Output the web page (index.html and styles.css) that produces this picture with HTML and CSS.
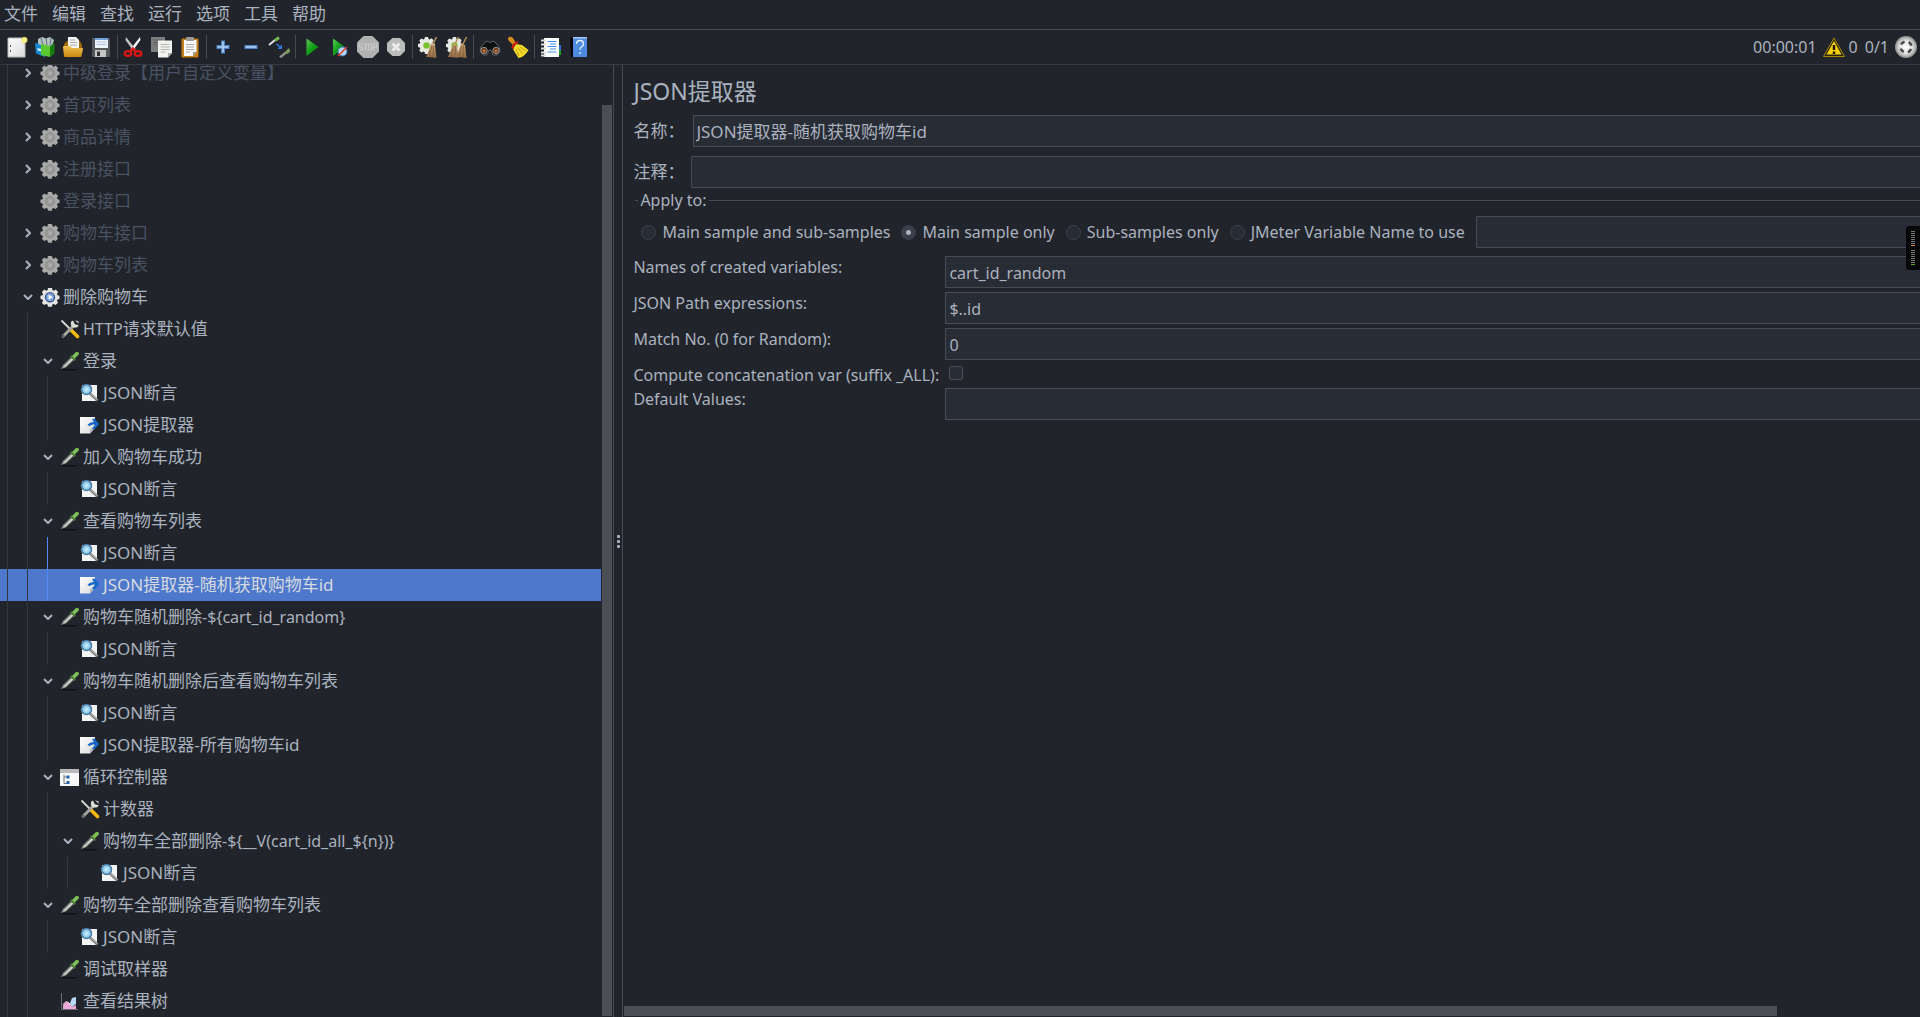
FILE: index.html
```html
<!DOCTYPE html>
<html lang="zh-CN">
<head>
<meta charset="utf-8">
<title>JMeter</title>
<link rel="stylesheet" href="styles.css">
</head>
<body>
<svg class="defs" width="0" height="0" aria-hidden="true">
  <defs>
    <linearGradient id="g-green" x1="0" y1="0" x2="1" y2="1"><stop offset="0" stop-color="#5fc95a"/><stop offset=".5" stop-color="#0f9d14"/><stop offset="1" stop-color="#067a08"/></linearGradient>
    <linearGradient id="g-gold" x1="0" y1="0" x2="0" y2="1"><stop offset="0" stop-color="#f2bf4e"/><stop offset="1" stop-color="#c98a12"/></linearGradient>
    <linearGradient id="g-page" x1="0" y1="0" x2="1" y2="1"><stop offset="0" stop-color="#fff"/><stop offset="1" stop-color="#d9d9d9"/></linearGradient>
    <linearGradient id="g-twig" x1="0" y1="0" x2="0" y2="1"><stop offset="0" stop-color="#c9a070"/><stop offset="1" stop-color="#8f6a42"/></linearGradient>
    <radialGradient id="g-ball"><stop offset="0" stop-color="#fff"/><stop offset=".6" stop-color="#e0e0e0"/><stop offset="1" stop-color="#8c8c8c"/></radialGradient>
    <radialGradient id="g-lens"><stop offset="0" stop-color="#d4f1fd"/><stop offset="1" stop-color="#6fb8e6"/></radialGradient>
  </defs>
  <symbol id="gear-off" viewBox="0 0 20 20"><path fill="#a9a9a9" d="M8 1h4l.5 2.2 1.3.6 2-1.2 2.3 2.4-1.1 2 .5 1.2 2 .5v3.2l-2 .6-.6 1.3 1.2 2-2.5 2.3-2-1.1-1.2.4-.5 2.3H8l-.5-2.3-1.3-.4-2 1.1L1.900 15.900 3 13.800l-.5-1.300L.5 12V8.700l2-.5.500-1.200-1.100-2L4.200 2.600l2 1.200 1.300-.6z"/><circle cx="10" cy="10.200" r="5" fill="#8e8e8e"/><circle cx="10" cy="10.200" r="3.500" fill="#9e9e9e"/><path d="M8.800 8l3.500 2.200-3.500 2.200z" fill="#b2b2b2"/></symbol>
  <symbol id="gear-on" viewBox="0 0 20 20"><path fill="#e4e4e2" d="M8 1h4l.5 2.200 1.300.6 2-1.200 2.300 2.400-1.100 2 .5 1.200 2 .5v3.200l-2 .6-.6 1.300 1.200 2-2.500 2.300-2-1.100-1.200.4-.5 2.300H8l-.5-2.300-1.300-.4-2 1.100L1.900 15.900 3 13.800l-.5-1.300L.5 12V8.700l2-.5.5-1.200-1.100-2L4.200 2.600l2 1.200 1.300-.6z"/><circle cx="10" cy="10.200" r="5.200" fill="#3c5b94"/><circle cx="10" cy="10.200" r="3.900" fill="#7fa3d8"/><path d="M8.600 7.600l4.200 2.600-4.200 2.600z" fill="#fff"/></symbol>
  <symbol id="tools" viewBox="0 0 20 20"><path d="M1.500 1.500l9 9" stroke="#d9d9d4" stroke-width="1.800"/><path d="M11 11l6.500 6.500" stroke="#f5b90c" stroke-width="3.600" stroke-linecap="round"/><path d="M3.200 17.200L13.500 6.800" stroke="#a6a69f" stroke-width="3" stroke-linecap="round"/><path d="M13 1.500l1.800 3.700 3.900 1.100-1.400 2-4 .5-2.400-2.500L11 2.800z" fill="#deded8"/><path d="M15 1.500l3.800 3.300-.4-2.800z" fill="#c9c9c4"/><circle cx="3.400" cy="17" r="1" fill="#444"/></symbol>
  <symbol id="dropper" viewBox="0 0 20 20"><ellipse cx="9" cy="18.700" rx="8" ry="1" fill="#111418"/><path d="M1 18l2-4 8-8 3 3-8 7.500z" fill="#85857f"/><path d="M2.500 16.500l9.700-9.300 1 1L5 15.800z" fill="#e5e5e0"/><path d="M10 5.500l1.500-1.200 4.500 4.500-1.400 1.300z" fill="#4c7c36"/><path d="M12 5l4-4q3-1 3 2.300l-4.500 4.500z" fill="#7fbd55"/></symbol>
  <symbol id="lens" viewBox="0 0 20 20"><path d="M2 2h15v16H2z" fill="#f4f4f4"/><path d="M9.500 10l8 7.500" stroke="#777" stroke-width="2.400"/><path d="M10 10l7.500 6.700" stroke="#c9c9c9"/><circle cx="6.500" cy="6.500" r="5" fill="url(#g-lens)" stroke="#4a7a9e" stroke-width="1.500"/></symbol>
  <symbol id="extract" viewBox="0 0 20 20"><path d="M0 2h15v11l-5 5.500H0z" fill="url(#g-page)"/><path d="M15 13l-5 5.500V14z" fill="#b5b5b5"/><path d="M8.500 10.500Q11 7.500 15.500 8.500M13 4l4.500 5-4.500 5" fill="none" stroke="#1666c8" stroke-width="2.600"/></symbol>
  <symbol id="loop" viewBox="0 0 20 20"><path d="M0 2h19v17H0z" fill="#f7f7f7"/><path d="M0 2h19v4H0z" fill="#b9b9b9"/><path d="M4 7.500v9h3M4 10h3" stroke="#777" fill="none"/><path d="M6.500 8.500h3v3h-3zM6.500 14h3v3h-3z" fill="#2266b0"/></symbol>
  <symbol id="chart" viewBox="0 0 20 20"><path d="M1.500 2v16.500H18" fill="none" stroke="#6a6d72"/><path d="M3 18v-4l3-3 3 1 3 4 4-2v4z" fill="#f0a8dc"/><path d="M10 12l2-5 4-1v7l-4 3z" fill="#b9d8f8"/><path d="M3 13.500l3-3 3 1.500 3 3.500" fill="none" stroke="#fbe3f5"/></symbol>
  <symbol id="down" viewBox="0 0 10 6"><path d="M1 1l4 4 4-4" fill="none" stroke="#abb2bf" stroke-width="2"/></symbol>
  <symbol id="right" viewBox="0 0 6 10"><path d="M1 1l4 4-4 4" fill="none" stroke="#abb2bf" stroke-width="2"/></symbol>
  <symbol id="cog-broom" viewBox="0 0 22 22"><path fill="#e8e8e5" d="M7 1h3l.6 2 1 .5 2-1.200 2 2-1.100 2 .5 1 2 .6v3l-2 .6-.5 1 1 2-2 2-2-1-1 .5-.6 2H7l-.5-2-1.200-.5-2 1-2-2 1-2-.5-1L0 11V8l1.900-.6.4-1-1-2 2-2 2 1.200 1-.5z"/><circle cx="8.500" cy="9.500" r="3.200" fill="#78c22b"/></symbol>
  <symbol id="twigs" viewBox="0 0 12 22"><path d="M10.500 1L7 8" stroke="#b98e5d" stroke-width="1.600"/><path d="M5 7.500l4 1.500 1.500 13Q5 21 0 21q3-6 5-13.500z" fill="url(#g-twig)"/><path d="M6 10L3 20M7.500 10l-.5 11" stroke="#7a5833" stroke-width=".7"/></symbol>
</svg>

<nav class="menubar">
  <button>文件</button><button>编辑</button><button>查找</button><button>运行</button><button>选项</button><button>工具</button><button>帮助</button>
</nav>

<header class="toolbar">
  <div class="tools">
    <button aria-label="新建"><svg viewBox="0 0 22 22"><path d="M2 2h17v19H2z" fill="url(#g-page)" stroke="#bbb"/><path d="M4.500 9v2M4.500 14v2" stroke="#555"/><circle cx="18.500" cy="4" r="3" fill="#f6e45c"/><circle cx="18.500" cy="4" r="1.500" fill="#fffbc4"/></svg></button>
    <button aria-label="模板"><svg viewBox="0 0 22 22"><path d="M4 3l4-2 4 1.500L16 1l4 3-2 6H4z" fill="#b5c2c4"/><path d="M7 2l2 7M12 2l1 7M17 2l-1 7" stroke="#5c7478"/><path d="M1 7l10 3v11L2 17.500z" fill="#1589cf"/><path d="M3.500 12l4 1v2.500l-4-1z" fill="#c8ecff"/><path d="M7 8l9 2v11l-9-2z" fill="#5ac82f"/><path d="M16 10l4.500-3v10.500L16 21z" fill="#187f0c"/></svg></button>
    <button aria-label="打开"><svg viewBox="0 0 22 22"><path d="M2 8l3-3h13l2 4v8H2z" fill="#9b6a0c"/><path d="M6 1h8l3 3v9H6z" fill="#f5f5f5"/><path d="M8 4h5M8 6.500h7M8 9h7" stroke="#aaa"/><path d="M1 11q0-1 1-1h6l2 2h10q1 0 1 1l-1.500 7q0 1-1 1H3q-1 0-1-1z" fill="url(#g-gold)"/></svg></button>
    <button aria-label="保存"><svg viewBox="0 0 22 22"><rect x="2" y="2" width="18" height="19" rx="1" fill="#56575a"/><path d="M5 2h13v10H5z" fill="#eef3fa"/><path d="M5 2h13v2H5z" fill="#74a4dc"/><path d="M6.500 6h10M6.500 8.500h10" stroke="#adc0d8"/><path d="M5 14h11v7H5z" fill="#c6c6c6"/><path d="M7 15.500h3V20H7z" fill="#333"/></svg></button>
  </div>
  <span class="sep"></span>
  <div class="tools">
    <button aria-label="剪切"><svg viewBox="0 0 22 22"><path d="M3 1l9.500 12-2.500 1.500L2.500 4z" fill="#c4c4c4"/><path d="M17 1L7.500 13l2.500 1.500L17.500 4z" fill="#f1f1f1"/><ellipse cx="5" cy="17.500" rx="3.200" ry="2.400" fill="none" stroke="#dc1515" stroke-width="2.400"/><ellipse cx="15" cy="17.500" rx="3.200" ry="2.400" fill="none" stroke="#dc1515" stroke-width="2.400"/><path d="M7 15.500l3-3 3 3" stroke="#dc1515" stroke-width="2.400" fill="none"/></svg></button>
    <button aria-label="复制"><svg viewBox="0 0 22 22"><path d="M0 1h14v15H0z" fill="#7a7c7d"/><path d="M2 4h9M2 6.500h5M2 9h5" stroke="#5d5f61"/><path d="M7 4.500h14V17l-4 4.500H7z" fill="#f2f2ee"/><path d="M9.500 8.500h9M9.500 11h9M9.500 13.500h9M9.500 16h5" stroke="#b5b7b0"/><path d="M21 17l-4 4.500V17z" fill="#aaa"/></svg></button>
    <button aria-label="粘贴"><svg viewBox="0 0 22 22"><rect x="2.500" y="2.500" width="17" height="19" rx="1" fill="#c27f1c"/><path d="M5 4h12.500v12L14 20H5z" fill="#fafafa"/><rect x="7" y="1" width="8" height="4" rx="1" fill="#9a9a92"/><path d="M7 8.500h8M7 11h8M7 13.500h8M7 16h4" stroke="#aaa"/><path d="M17.500 16L14 20v-4z" fill="#999"/></svg></button>
  </div>
  <span class="sep"></span>
  <div class="tools">
    <button aria-label="展开"><svg viewBox="0 0 22 22"><path d="M11 4.500v13M4.500 11h13" stroke="#4a80c4" stroke-width="4"/><path d="M11 5.500v11M5.500 11h11" stroke="#b3d2f3" stroke-width="1.600"/></svg></button>
    <button aria-label="折叠"><svg viewBox="0 0 22 22"><path d="M4.500 11h13" stroke="#4a80c4" stroke-width="4"/><path d="M5.500 11h11" stroke="#b3d2f3" stroke-width="1.600"/></svg></button>
    <button aria-label="切换"><svg viewBox="0 0 22 22"><path d="M1 9l6-5" stroke="#deded9" stroke-width="2"/><path d="M7 4.500l4-3" stroke="#77b752" stroke-width="3"/><path d="M12 21.500l6-5" stroke="#8d8d86" stroke-width="2.400"/><path d="M18 17l4-3.500" stroke="#78995d" stroke-width="3.400"/><path d="M8.500 8l4 3.500" stroke="#2d7be6" stroke-width="1.600"/><path d="M14 13H9.500L14 8.500z" fill="#2d7be6"/></svg></button>
  </div>
  <span class="sep"></span>
  <div class="tools">
    <button aria-label="启动"><svg viewBox="0 0 22 22"><path d="M5.500 2.500L17.500 11 5.500 20z" fill="url(#g-green)"/></svg></button>
    <button aria-label="不停顿开始"><svg viewBox="0 0 22 22"><path d="M4 2.500L16 11 4 20z" fill="url(#g-green)"/><circle cx="13.500" cy="15.500" r="4.500" fill="#b9d5f5" stroke="#3976c4"/><path d="M9 20l9-9" stroke="#e23426" stroke-width="1.500"/></svg></button>
    <button aria-label="停止"><svg viewBox="0 0 22 22"><path d="M6.500 0h9L22 6.500v9L15.500 22h-9L0 15.500v-9z" fill="#b1b1b1"/><g fill="none" stroke="#c9c9c9" stroke-width="1.200"><path d="M5.500 8h-3v3h3v3h-3M6.500 8h4M8.500 8v6.500M11.500 8h3v6h-3zM16.500 14.500V8h3v3.500h-3"/></g></svg></button>
    <button aria-label="关闭"><svg viewBox="0 0 22 22"><path d="M7.500 2h7.500l5 5v8l-5 5H7.500L2 15V7z" fill="#bcbcbc"/><path d="M7.500 7.500l7 7M14.500 7.500l-7 7" stroke="#ededed" stroke-width="2.800"/></svg></button>
  </div>
  <span class="sep"></span>
  <div class="tools">
    <button aria-label="清除"><svg viewBox="0 0 22 22"><use href="#cog-broom"/><use href="#twigs" x="8" width="12" height="22"/></svg></button>
    <button aria-label="清除全部"><svg viewBox="0 0 22 22"><use href="#cog-broom"/><use href="#twigs" x="2" width="12" height="22"/><use href="#twigs" x="10" width="12" height="22"/></svg></button>
  </div>
  <span class="sep"></span>
  <div class="tools">
    <button aria-label="查找"><svg viewBox="0 0 22 22"><path d="M2 11l4-5 3-1 2 2 2-2 3 1 4 5 1 4-3 4h-4l-2-5h-2l-2 5H4l-3-4z" fill="#101112" stroke="#5f6164"/><circle cx="5" cy="14.500" r="3.200" fill="#6b3d20" stroke="#99938d"/><circle cx="17" cy="14.500" r="3.200" fill="#6b3d20" stroke="#99938d"/><circle cx="5" cy="15" r="1.300" fill="#c97b42"/><circle cx="17" cy="15" r="1.300" fill="#c97b42"/></svg></button>
    <button aria-label="重置查找"><svg viewBox="0 0 22 22"><path d="M2 1q2-1 4 1l3 5-3 2-4-4Q0 3 2 1z" fill="#d38b1b"/><path d="M9 8l6 1 6.500 5q-4 7-10 8Q8 17 6 13z" fill="#f2d92a"/><path d="M11 12l5 6M9 13l3 7M13 11l6 4" stroke="#c59f0e"/><path d="M5.500 12.500Q6 8 11 6" stroke="#d21d15" stroke-width="2.400" fill="none"/></svg></button>
  </div>
  <span class="sep"></span>
  <div class="tools">
    <button aria-label="函数助手"><svg viewBox="0 0 22 22"><path d="M17 9h4v5h-4z" fill="#2b70d6"/><path d="M17 14h4v5h-4z" fill="#1d9a2a"/><path d="M4 2h15v19H4z" fill="#fff"/><path d="M7.500 5.500h9M10 8h6M7.500 10.500h9M10 13h6M7.500 16h9" stroke="#3f88ec" stroke-width="1.200"/><path d="M1 4.500h5M1 8.500h5M1 12.500h5M1 16.500h5M1 19.500h5" stroke="#dcdcdc" stroke-width="1.800"/></svg></button>
    <button aria-label="帮助"><svg viewBox="0 0 22 22"><path d="M2 2l3-1v20H3z" fill="#060606"/><path d="M5 1h14v20H5z" fill="#4e8be0"/><path d="M5 1h14v1.500H5z" fill="#a9c9f4"/><path d="M8.500 8q0-3.500 3.500-3.500T15.500 8q0 1.800-1.900 2.700-1.600 1-1.600 3M12 16v2" fill="none" stroke="#e9f1fc" stroke-width="1.300"/></svg></button>
  </div>
  <div class="status">
    <span class="clock">00:00:01</span>
    <button aria-label="日志"><svg viewBox="0 0 22 22"><path d="M11 2l10.500 18.500H.5z" fill="#2b2200" stroke="#a58b0b"/><path d="M11 5l7.500 13.500h-15z" fill="#f5cf08"/><path d="M11 9v5M11 15.500v2.500" stroke="#1d1900" stroke-width="2.400"/></svg></button>
    <span class="errors">0</span>
    <span class="threads">0/1</span>
    <svg class="ball" viewBox="0 0 22 22"><circle cx="11" cy="11" r="11" fill="url(#g-ball)"/><circle cx="11" cy="11" r="5.500" fill="none" stroke="#4a4a4a" stroke-width="2.600" stroke-dasharray="4.300 4.340" stroke-dashoffset="-2.170"/></svg>
  </div>
</header>

<main class="workspace">
  <aside class="sidebar">
    <ul class="tree">
      <li class="off"><i></i><b><svg class="r"><use href="#right"/></svg></b><svg class="ico"><use href="#gear-off"/></svg>中级登录【用户自定义变量】</li>
      <li class="off"><i></i><b><svg class="r"><use href="#right"/></svg></b><svg class="ico"><use href="#gear-off"/></svg>首页列表</li>
      <li class="off"><i></i><b><svg class="r"><use href="#right"/></svg></b><svg class="ico"><use href="#gear-off"/></svg>商品详情</li>
      <li class="off"><i></i><b><svg class="r"><use href="#right"/></svg></b><svg class="ico"><use href="#gear-off"/></svg>注册接口</li>
      <li class="off"><i></i><b></b><svg class="ico"><use href="#gear-off"/></svg>登录接口</li>
      <li class="off"><i></i><b><svg class="r"><use href="#right"/></svg></b><svg class="ico"><use href="#gear-off"/></svg>购物车接口</li>
      <li class="off"><i></i><b><svg class="r"><use href="#right"/></svg></b><svg class="ico"><use href="#gear-off"/></svg>购物车列表</li>
      <li><i></i><b><svg class="d"><use href="#down"/></svg></b><svg class="ico"><use href="#gear-on"/></svg>删除购物车</li>
      <li><i></i><i></i><b></b><svg class="ico"><use href="#tools"/></svg><span class="latin">HTTP</span>请求默认值</li>
      <li><i></i><i></i><b><svg class="d"><use href="#down"/></svg></b><svg class="ico"><use href="#dropper"/></svg>登录</li>
      <li><i></i><i></i><i></i><b></b><svg class="ico"><use href="#lens"/></svg>JSON断言</li>
      <li><i></i><i></i><i></i><b></b><svg class="ico"><use href="#extract"/></svg>JSON提取器</li>
      <li><i></i><i></i><b><svg class="d"><use href="#down"/></svg></b><svg class="ico"><use href="#dropper"/></svg>加入购物车成功</li>
      <li><i></i><i></i><i></i><b></b><svg class="ico"><use href="#lens"/></svg>JSON断言</li>
      <li><i></i><i></i><b><svg class="d"><use href="#down"/></svg></b><svg class="ico"><use href="#dropper"/></svg>查看购物车列表</li>
      <li><i></i><i></i><i class="active"></i><b></b><svg class="ico"><use href="#lens"/></svg>JSON断言</li>
      <li class="selected"><i></i><i></i><i class="active"></i><b></b><svg class="ico"><use href="#extract"/></svg>JSON提取器-随机获取购物车id</li>
      <li><i></i><i></i><b><svg class="d"><use href="#down"/></svg></b><svg class="ico"><use href="#dropper"/></svg>购物车随机删除<span class="latin">-${cart_id_random}</span></li>
      <li><i></i><i></i><i></i><b></b><svg class="ico"><use href="#lens"/></svg>JSON断言</li>
      <li><i></i><i></i><b><svg class="d"><use href="#down"/></svg></b><svg class="ico"><use href="#dropper"/></svg>购物车随机删除后查看购物车列表</li>
      <li><i></i><i></i><i></i><b></b><svg class="ico"><use href="#lens"/></svg>JSON断言</li>
      <li><i></i><i></i><i></i><b></b><svg class="ico"><use href="#extract"/></svg>JSON提取器-所有购物车id</li>
      <li><i></i><i></i><b><svg class="d"><use href="#down"/></svg></b><svg class="ico"><use href="#loop"/></svg>循环控制器</li>
      <li><i></i><i></i><i></i><b></b><svg class="ico"><use href="#tools"/></svg>计数器</li>
      <li><i></i><i></i><i></i><b><svg class="d"><use href="#down"/></svg></b><svg class="ico"><use href="#dropper"/></svg>购物车全部删除<span class="latin">-${__V(cart_id_all_${n})}</span></li>
      <li><i></i><i></i><i></i><i></i><b></b><svg class="ico"><use href="#lens"/></svg>JSON断言</li>
      <li><i></i><i></i><b><svg class="d"><use href="#down"/></svg></b><svg class="ico"><use href="#dropper"/></svg>购物车全部删除查看购物车列表</li>
      <li><i></i><i></i><i></i><b></b><svg class="ico"><use href="#lens"/></svg>JSON断言</li>
      <li><i></i><i></i><b></b><svg class="ico"><use href="#dropper"/></svg>调试取样器</li>
      <li><i></i><i></i><b></b><svg class="ico"><use href="#chart"/></svg>查看结果树</li>
    </ul>
    <div class="vscroll"><div class="thumb"></div></div>
  </aside>
  <div class="splitter"><span></span><span></span><span></span></div>
  <section class="panel">
    <form class="form">
      <h1>JSON提取器</h1>
      <div class="line name"><label for="name">名称：</label><input id="name" type="text" value="JSON提取器-随机获取购物车id"></div>
      <div class="line note"><label for="note">注释：</label><input id="note" type="text"></div>
      <fieldset>
        <legend>Apply to:</legend>
        <div class="choices">
          <label><input type="radio" name="scope">Main sample and sub-samples</label>
          <label><input type="radio" name="scope" checked>Main sample only</label>
          <label><input type="radio" name="scope">Sub-samples only</label>
          <label><input type="radio" name="scope">JMeter Variable Name to use</label>
          <input type="text" aria-label="JMeter Variable Name">
        </div>
      </fieldset>
      <div class="fields">
        <label for="vars">Names of created variables:</label><input id="vars" type="text" value="cart_id_random">
        <label for="path">JSON Path expressions:</label><input id="path" type="text" value="$..id">
        <label for="match">Match No. (0 for Random):</label><input id="match" type="text" value="0">
        <label class="short" for="all">Compute concatenation var (suffix _ALL):</label><input id="all" type="checkbox">
        <label for="defaults">Default Values:</label><input id="defaults" type="text">
      </div>
    </form>
    <div class="hscroll"><div class="thumb"></div></div>
  </section>
</main>

<div class="meter"><span class="bars orange"></span><span class="bars green"></span></div>
</body>
</html>
```
FILE: styles.css
```css
* { box-sizing: border-box; }

body {
  margin: 0;
  height: 100vh;
  overflow: hidden;
  display: flex;
  flex-direction: column;
  background: #21252b;
  color: #abb2bf;
  font: 16px/22px "Noto Sans", "Noto Sans CJK SC", sans-serif;
}

.defs { position: absolute; }
button { border: 0; padding: 0; background: none; color: inherit; font: inherit; }

/* Menu bar */
.menubar {
  display: flex;
  gap: 14px;
  height: 30px;
  padding: 0 4px 2px;
  align-items: center;
  border-bottom: 1px solid #464a53;
  font-size: 17px;
}

/* Toolbar */
.toolbar {
  display: flex;
  align-items: center;
  height: 35px;
  padding: 0 3px;
  border-bottom: 1px solid #373b43;
}
.tools { display: flex; }
.tools button {
  display: flex;
  width: 28px;
  height: 28px;
  align-items: center;
  justify-content: center;
}
.tools svg, .status svg { display: block; width: 22px; height: 22px; }
.sep { width: 1px; height: 24px; margin: 0 2px; background: #464a53; }
.status { display: flex; align-items: center; margin-left: auto; }
.clock { margin-right: 6px; }
.errors { margin-left: 4px; }
.threads { margin: 0 6px 0 7px; }

/* Workspace */
.workspace { display: flex; flex: 1; min-height: 0; }
.sidebar {
  display: flex;
  width: 32%;
  overflow: hidden;
  border-right: 1px solid #464a53;
}
.tree {
  flex: 1;
  min-width: 0;
  margin: -8px 0 0;
  padding: 0;
  list-style: none;
  font-size: 17px;
}
.tree li {
  display: flex;
  height: 32px;
  align-items: center;
  white-space: pre;
  line-height: 24px;
}
.tree .off { color: #495162; }
.tree .selected { background: #4d78cc; color: #d7dae0; }
.tree i {
  width: 13px;
  height: 32px;
  margin-left: 7px;
  border-left: 1px solid #33373e;
}
.tree .active { border-color: #568af2; }
.tree b { display: flex; width: 20px; padding-right: 5px; justify-content: center; }
.tree .ico { width: 20px; height: 20px; margin-right: 3px; }
.tree .d { width: 10px; height: 6px; }
.tree .r { width: 6px; height: 10px; }
.latin { font-size: 16px; }

.vscroll { display: flex; width: 12px; padding: 40px 1px 1px; }
.thumb { flex: 1; background: #4b4e55; }

.splitter {
  display: flex;
  flex-direction: column;
  gap: 2px;
  width: 9px;
  align-items: center;
  justify-content: center;
  border-right: 1px solid #464a53;
}
.splitter span { width: 3px; height: 3px; border-radius: 1px; background: #abb2bf; }

/* Element settings */
.panel {
  display: flex;
  flex-direction: column;
  flex: 1;
  min-width: 0;
  overflow: hidden;
  justify-content: space-between;
}
.form { margin-right: -16px; padding: 11px 0 0 10px; }
.form h1 { margin: 0 0 9px; font-size: 23px; line-height: 30px; font-weight: 400; }
input[type="text"] {
  flex: 1;
  width: 100%;
  min-width: 0;
  height: 32px;
  padding: 0 3px;
  border: 1px solid #464b55;
  border-radius: 0;
  background: #282c34;
  color: inherit;
  font: inherit;
}
.line { display: flex; align-items: center; font-size: 17px; }
.line input[type="text"] { padding: 0 2px 2px; }
.name { margin-bottom: 9px; }
.name label { width: 60px; }
.note label { width: 58px; }
fieldset {
  min-width: 0;
  margin: 1px 0 0 2px;
  padding: 5px 0 8px 6px;
  border: 0;
  border-top: 1px solid #464b55;
}
legend { margin-left: -3px; padding: 0 2px; }
.choices { display: flex; align-items: center; gap: 11px; }
.choices label { display: flex; align-items: center; gap: 6px; white-space: nowrap; }
input[type="radio"], input[type="checkbox"] {
  appearance: none;
  width: 15px;
  height: 15px;
  margin: 0;
  border: 1px solid #3a3f4b;
  border-radius: 50%;
  background: #282c34;
}
input[type="radio"]:checked {
  background: radial-gradient(circle, #abb2bf 2px, #3a3f4b 3px);
}
.fields {
  display: grid;
  grid-template-columns: 312px 1fr;
  align-items: start;
}
.fields label { white-space: nowrap; }
.fields input[type="text"] { margin-bottom: 4px; padding-top: 2px; }
.fields .short { height: 24px; }
.fields input[type="checkbox"] { width: 14px; height: 14px; margin: 2px 4px; border-radius: 2px; border-color: #464b55; }

.hscroll { display: flex; width: 89%; height: 11px; padding: 0 0 1px 1px; }

/* Level meter floating at the window edge */
.meter {
  position: absolute;
  top: 226px;
  right: 0;
  display: flex;
  flex-direction: column;
  gap: 4px;
  padding: 5px;
  border-radius: 3px 0 0 3px;
  background: #050607;
}
.bars {
  width: 4px;
  height: 15px;
  border-bottom: 1px solid;
  background: repeating-linear-gradient(#777 0 1px, transparent 1px 2px);
}
.orange { border-color: #d98a1c; }
.green { border-color: #62a81e; }
```
